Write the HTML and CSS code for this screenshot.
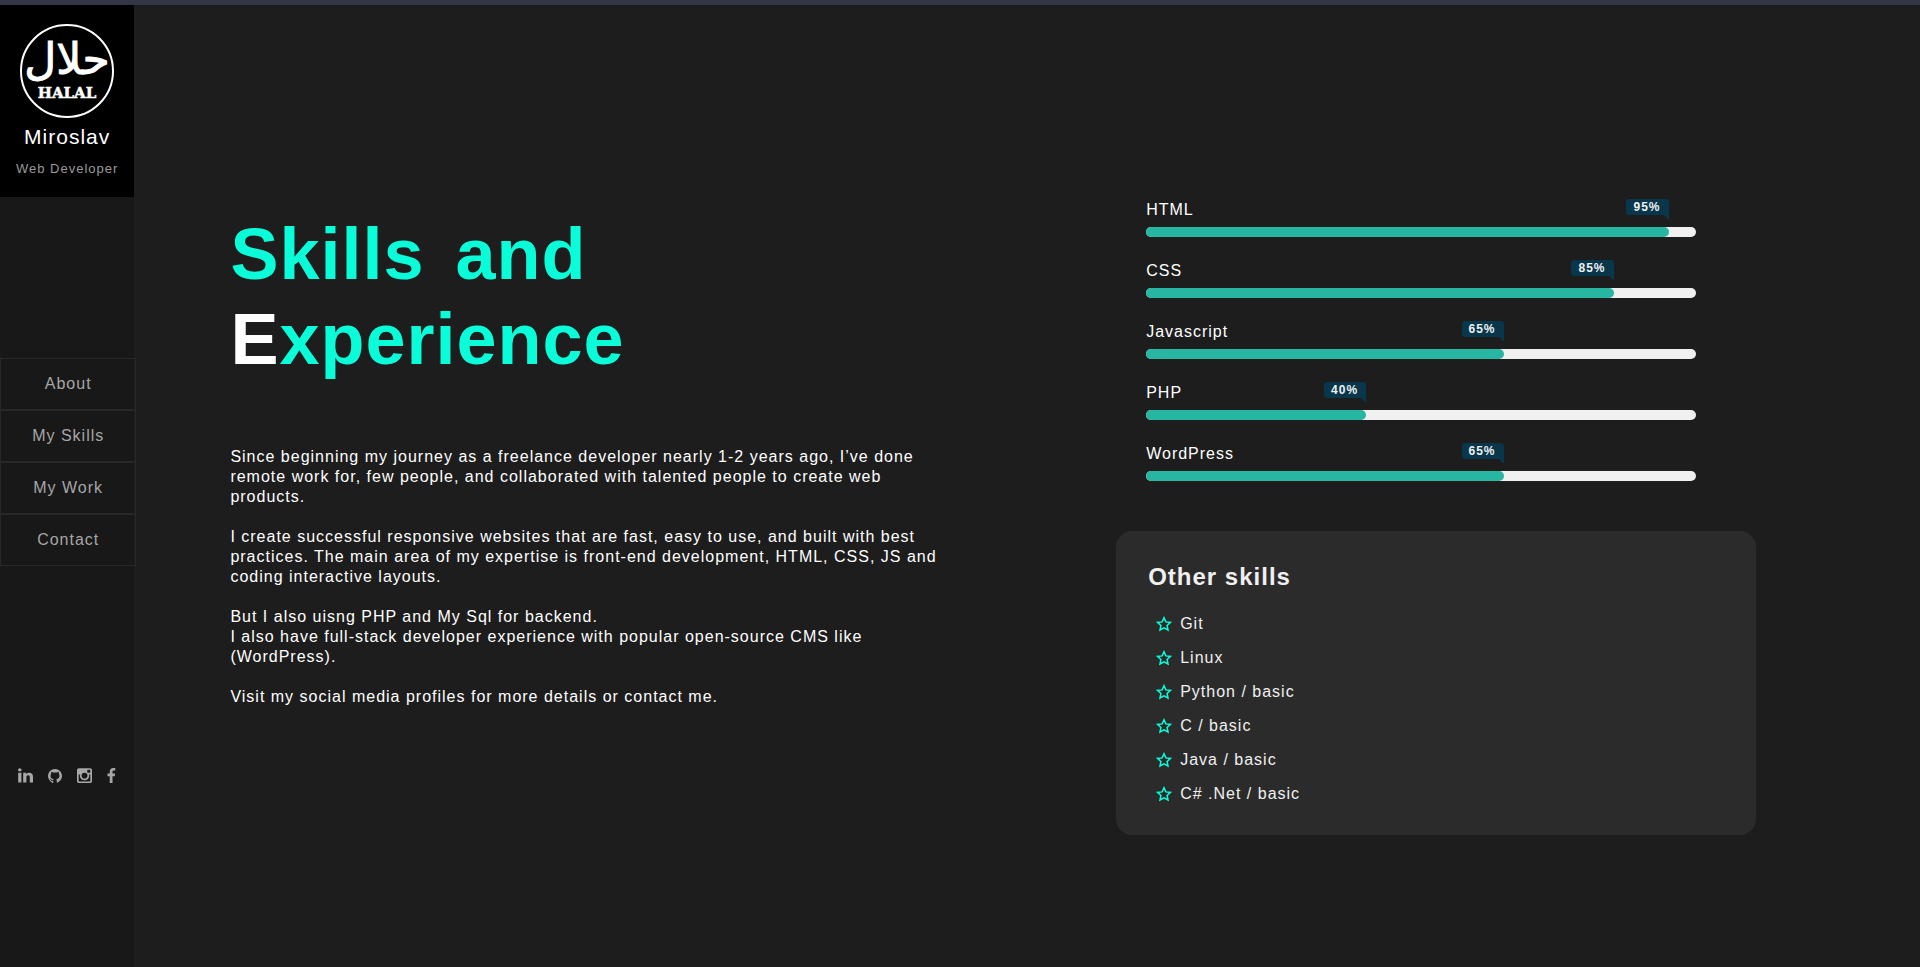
FILE: index.html
```html
<!DOCTYPE html>
<html lang="en">
<head>
<meta charset="utf-8">
<title>Miroslav - Web Developer</title>
<link rel="stylesheet" href="styles.css">
</head>
<body>
<div class="page">
  <aside class="sidebar">
    <header class="profile">
      <svg class="logo" viewBox="0 0 94 94" role="img" aria-label="Halal">
        <circle cx="47" cy="47" r="46"/>
        <text class="logo-arabic" x="47" y="50" lang="ar">حلال</text>
        <text class="logo-latin" x="47" y="74">HALAL</text>
      </svg>
      <p class="name">Miroslav</p>
      <p class="role">Web Developer</p>
    </header>
    <nav class="menu">
      <a href="#about">About</a>
      <a href="#skills">My Skills</a>
      <a href="#work">My Work</a>
      <a href="#contact">Contact</a>
    </nav>
    <div class="social">
      <a href="#linkedin" aria-label="LinkedIn"><svg width="15" height="15" viewBox="0 0 1536 1536"><path d="M349 497v991H19V497h330zm21-306q1 73-50.500 122T184 362h-2q-82 0-132-49T0 191q0-74 51.500-122.500T186 20t133 48.500T370 191zm1166 729v568h-329V958q0-105-40.500-164.500T1040 734q-63 0-105.500 34.500T871 854q-11 30-11 81v553H531q2-399 2-647t-1-296l-1-48h329v144h-2q20-32 41-56t56.500-52 87-43.500T1157 474q171 0 275 113.500T1536 920z"/></svg></a>
      <a href="#github" aria-label="GitHub"><svg width="14" height="14" viewBox="0 0 1536 1536"><path d="M1536 768q0 251-146.500 451.500T1011 1497q-27 5-39.500-7t-12.500-30v-211q0-97-52-142 57-6 102.500-18t94-39 81-66.500 53-105T1258 728q0-121-79-206 37-91-8-204-28-9-81 11t-92 44l-38 24q-93-26-192-26t-192 26q-16-11-42.500-27T450 331.500 365 318q-44 113-7 204-79 85-79 206 0 85 20.500 150t52.500 105 80.500 67 94 39 102.500 18q-40 36-49 103-21 10-45 15t-57 5-65.500-21.500T356 1146q-19-32-48.500-52t-49.500-24l-20-3q-21 0-29 4.500t-5 11.500 9 14 13 12l7 5q22 10 43.500 38t31.500 51l10 23q13 38 44 61.500t67 30 69.500 7 55.500-3.500l23-4q0 38 .5 103t.5 68q0 22-11 33.500t-22 13-33 1.500Q293 1420 146.500 1219.500T0 768Q0 559 103 382.500T382.500 103 768 0t385.500 103T1433 382.500 1536 768z"/></svg></a>
      <a href="#instagram" aria-label="Instagram"><svg width="15" height="15" viewBox="0 0 1536 1536"><path d="M1362 1312V664h-135q20 63 20 131 0 126-64 232.500T1009 1196t-240 62q-197 0-337-135.500T292 795q0-68 20-131H171v648q0 26 17.500 43.500T232 1373h1069q25 0 43-17.500t18-43.500zm-284-533q0-124-90.500-211.500T769 480q-127 0-217.500 87.500T461 779t90.500 211.500T769 1078q128 0 218.500-87.500T1078 779zm284-360V254q0-28-20-48.500t-49-20.500h-174q-29 0-49 20.500t-20 48.500v165q0 29 20 49t49 20h174q29 0 49-20t20-49zm174-208v1142q0 81-58 139t-139 58H197q-81 0-139-58T0 1353V211q0-81 58-139t139-58h1142q81 0 139 58t58 139z"/></svg></a>
      <a href="#facebook" aria-label="Facebook"><svg width="9" height="15" viewBox="0 0 960 1664"><path d="M895 12v264H738q-86 0-116 36t-30 108v189h293l-39 296H592v759H286V905H31V609h255V391q0-186 104-288.500T667 0q147 0 228 12z"/></svg></a>
    </div>
  </aside>
  <main class="content">
    <section class="intro">
      <h1><span class="word">Skills</span> and<br><span class="initial">E</span>xperience</h1>
      <p>Since beginning my journey as a freelance developer nearly 1-2 years ago, I’ve done remote work for, few people, and collaborated with talented people to create web products.</p>
      <p>I create successful responsive websites that are fast, easy to use, and built with best practices. The main area of my expertise is front-end development, HTML, CSS, JS and coding interactive layouts.</p>
      <p>But I also uisng PHP and My Sql for backend.<br>I also have full-stack developer experience with popular open-source CMS like (WordPress).</p>
      <p>Visit my social media profiles for more details or contact me.</p>
    </section>
    <section class="skills">
      <div class="bars">
        <div class="skill"><span>HTML</span><div class="track"><div class="fill" style="width:95%"><b class="badge">95%</b></div></div></div>
        <div class="skill"><span>CSS</span><div class="track"><div class="fill" style="width:85%"><b class="badge">85%</b></div></div></div>
        <div class="skill"><span>Javascript</span><div class="track"><div class="fill" style="width:65%"><b class="badge">65%</b></div></div></div>
        <div class="skill"><span>PHP</span><div class="track"><div class="fill" style="width:40%"><b class="badge">40%</b></div></div></div>
        <div class="skill"><span>WordPress</span><div class="track"><div class="fill" style="width:65%"><b class="badge">65%</b></div></div></div>
      </div>
      <div class="card">
        <h2>Other skills</h2>
        <svg class="defs" aria-hidden="true"><symbol id="star" viewBox="0 0 16 16"><path d="M8 1.700L9.900 5.900L14.500 6.400L11.100 9.500L12 14L8 11.800L4 14L4.900 9.500L1.500 6.400L6.100 5.900Z"/></symbol></svg>
        <ul>
          <li><svg class="star"><use href="#star"/></svg>Git</li>
          <li><svg class="star"><use href="#star"/></svg>Linux</li>
          <li><svg class="star"><use href="#star"/></svg>Python / basic</li>
          <li><svg class="star"><use href="#star"/></svg>C / basic</li>
          <li><svg class="star"><use href="#star"/></svg>Java / basic</li>
          <li><svg class="star"><use href="#star"/></svg>C# .Net / basic</li>
        </ul>
      </div>
    </section>
  </main>
</div>
</body>
</html>
```
FILE: styles.css
```css
* { box-sizing: border-box; margin: 0; padding: 0; }
body {
  background: #1d1d1d;
  color: #fff;
  font: 16px/20px "Liberation Sans", Arial, sans-serif;
  letter-spacing: 1px;
}
.page {
  display: grid;
  grid-template-columns: 7% 1fr;
  min-height: 100vh;
  border-top: 5px solid #333645;
}
.sidebar {
  display: flex;
  flex-direction: column;
  background: #181818;
}
.profile {
  padding: 19px 0 20px;
  background: #000;
  text-align: center;
}
.logo { display: block; width: 94px; height: 94px; margin: 0 auto 7px; }
.logo circle { fill: none; stroke: #fff; stroke-width: 2; }
.logo text { fill: #fff; text-anchor: middle; letter-spacing: 0; }
.logo .logo-arabic { font: 44px "DejaVu Sans", sans-serif; stroke: #fff; stroke-width: 1; }
.logo .logo-latin { font: bold 15px "DejaVu Serif", serif; stroke: #fff; stroke-width: 0.5; }
.name { font-size: 21px; line-height: 24px; }
.role { margin-top: 12px; font-size: 13px; line-height: 16px; color: #9a9a9a; }
.menu { display: flex; flex-direction: column; margin: 161px -2px 0 0; }
.menu a {
  padding: 15px 0;
  border: 1px solid #282828;
  color: #a6a6a6;
  text-align: center;
  text-decoration: none;
}
.social {
  display: flex;
  align-items: center;
  justify-content: center;
  gap: 15px;
  margin-top: 202px;
}
.social a { display: flex; }
.social svg { fill: #a6a6a6; }
.content {
  display: grid;
  grid-template-columns: 9fr 8fr;
  gap: 166px;
  align-items: start;
  padding: 195px 164px 80px 96px;
}
.intro { padding-top: 12px; }
h1 {
  margin-bottom: 65px;
  color: #08fdd8;
  font-size: 72px;
  line-height: 85px;
}
.word { margin-right: 10px; }
.initial { color: #fff; }
.intro p { margin-bottom: 20px; }
.bars {
  display: flex;
  flex-direction: column;
  gap: 24px;
  margin: 0 60px 50px 30px;
}
.skill span { display: block; margin-bottom: 7px; }
.track { height: 10px; border-radius: 5px; background: #f0f0f0; }
.fill {
  position: relative;
  height: 10px;
  border-radius: 5px;
  background: #26b6a2;
}
.badge {
  position: absolute;
  right: 0;
  top: -28px;
  padding: 0 8px 0 7px;
  border-radius: 3px 3px 0 3px;
  background: #08374b;
  color: #f0f0f0;
  font-size: 12px;
  line-height: 16px;
}
.badge::after {
  content: "";
  position: absolute;
  right: 0;
  top: 16px;
  border-top: 5px solid #08374b;
  border-left: 5px solid transparent;
}
.card {
  padding: 32px 32px 24px;
  border-radius: 16px;
  background: #2b2b2b;
  color: #f0f0f0;
}
h2 { font-size: 24px; line-height: 28px; margin-bottom: 16px; }
.defs { display: none; }
ul { padding-left: 8px; list-style: none; }
li { display: flex; align-items: center; gap: 8px; height: 34px; }
.star { width: 16px; height: 16px; fill: none; stroke: #08fdd8; stroke-width: 1.5; }
```
